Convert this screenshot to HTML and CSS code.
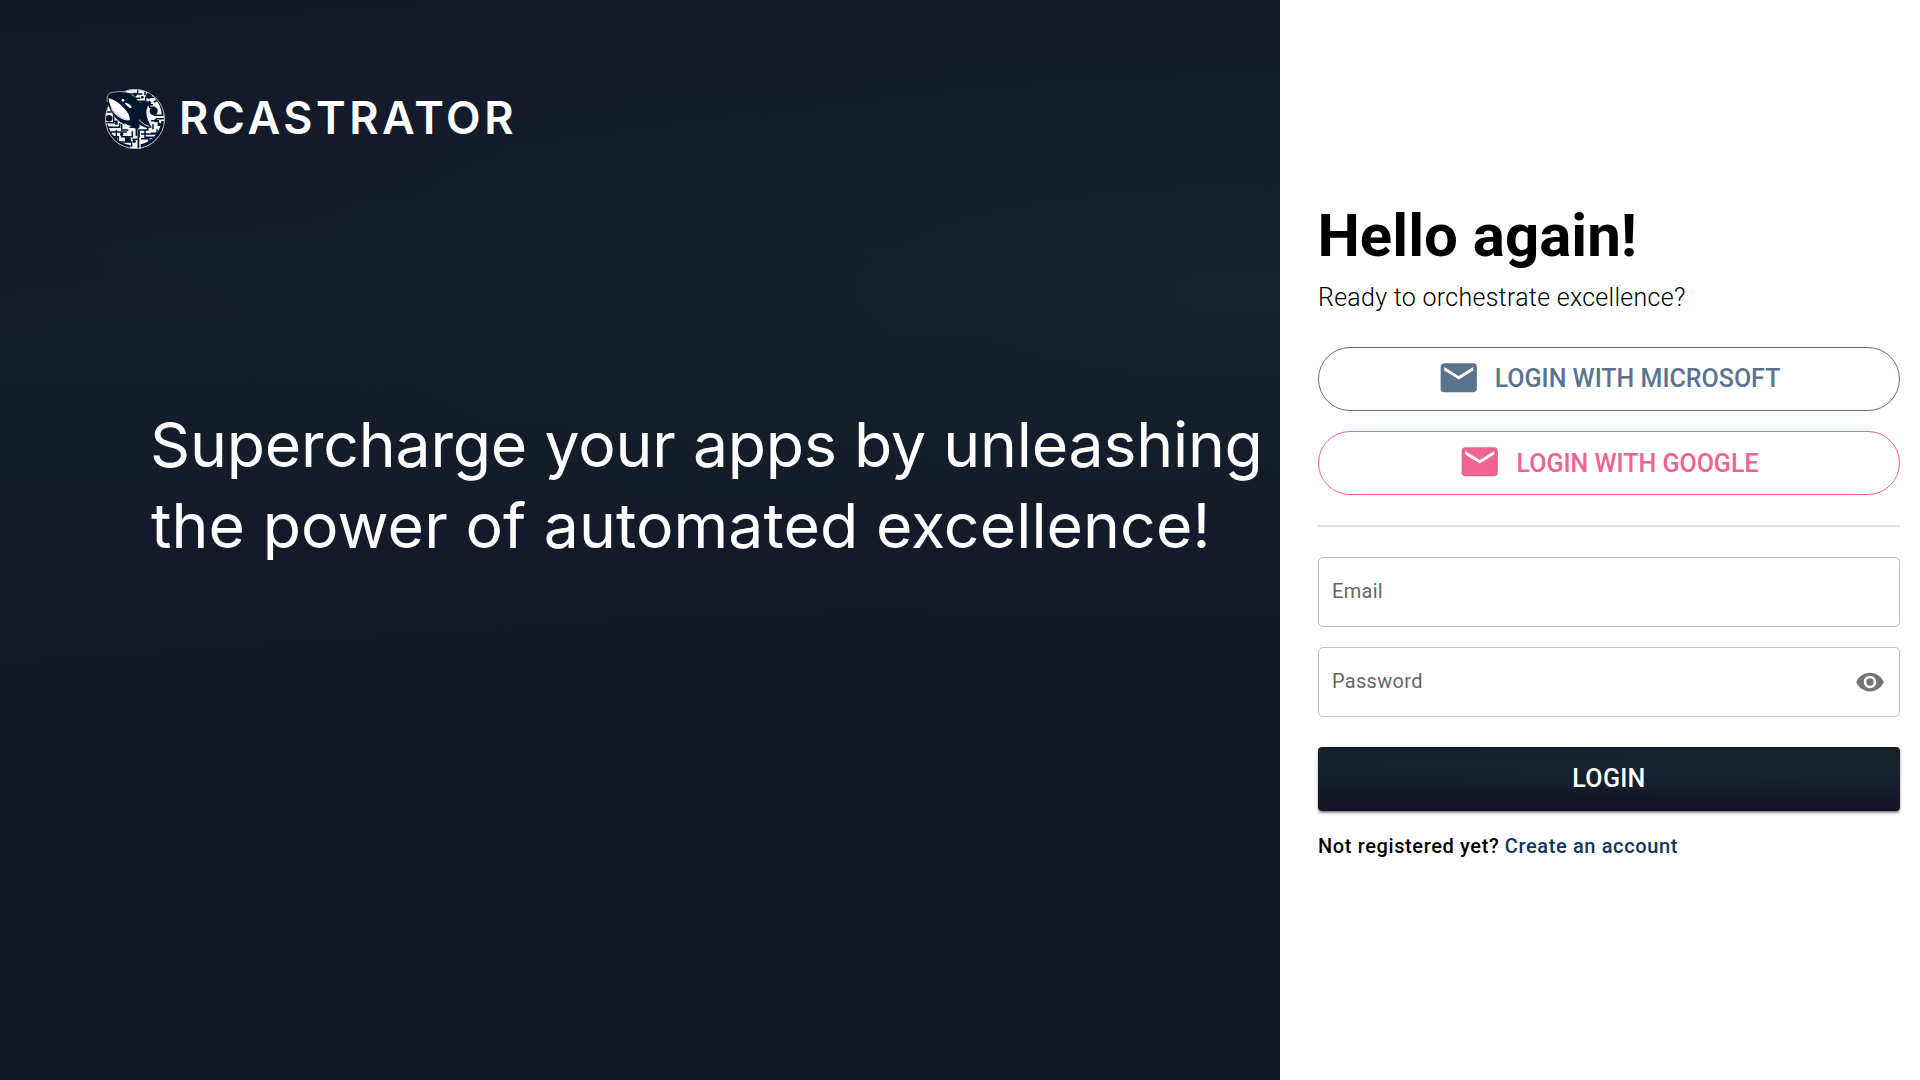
FILE: index.html
```
<!DOCTYPE html>
<html lang="en">
<head>
<meta charset="utf-8">
<title>Rcastrator - Login</title>
<link rel="stylesheet" href="styles.css">
</head>
<body>
<div class="page">
  <section class="hero">
    <header class="brand">
      <svg class="brand-logo" viewBox="30 27 180 180" aria-hidden="true">
        <defs><clipPath id="disc"><circle cx="120" cy="117" r="88"/></clipPath></defs>
        <circle cx="120" cy="117" r="89" fill="#f4f5f8"/>
        <g clip-path="url(#disc)" fill="none" stroke="#04162e" stroke-width="4.500">
          <path d="M100 42h20v10M128 28v14h14M150 30v16M108 55h28M130 64h22v-12h26M146 74h28M118 38v10M164 62v20h16M176 66l14-6M182 116h26M176 106h30M168 122h22v14h18M174 132v16M186 148v12h-18"/>
          <path d="M34 96h16M32 128h24v-12M56 104v20h12M38 142h36v-12M80 132v18h20M46 156h50M64 150v28M80 158v12h34M104 142h20v26M48 170h22v18M76 186h34v14M92 172v14M134 150h24v-8M138 162h44M150 150v22h28M138 176h24v18M168 176v12h14M112 154v16M112 178h16M90 196v10"/>
          <path d="M206 124A87 87 0 0 1 134 200" stroke-width="13"/>
          <path d="M33 134A88 88 0 0 0 106 201" stroke-width="11"/>
          <path d="M178 44A91 91 0 0 1 207 104" stroke-width="13"/>
        </g>
        <g fill="#04162e">
          <circle cx="162" cy="47" r="9"/><circle cx="176" cy="93" r="12"/><circle cx="42" cy="115" r="10"/><circle cx="100" cy="179" r="8"/>
          <circle cx="122" cy="43" r="5"/><circle cx="142" cy="52" r="4"/><circle cx="64" cy="130" r="5"/><circle cx="182" cy="122" r="5"/><circle cx="80" cy="163" r="5"/><circle cx="118" cy="184" r="5"/><circle cx="194" cy="132" r="4"/>
        </g>
        <path d="M131 148v56" stroke="#04162e" stroke-width="7"/>
        <path d="M135 172v34" stroke="#f4f5f8" stroke-width="4"/>
        <circle cx="120" cy="117" r="88.500" fill="none" stroke="#aeb5c1" stroke-width="2.500"/>
        <path d="M37 66C33 45 42 36 58 37C75 32 95 36 109 45C120 51 127 60 134 68C145 62 158 64 169 68C158 74 153 85 153 97C153 113 160 127 169 142C158 146 143 139 132 132C134 139 132 145 127 147C113 142 99 131 84 130C61 119 46 92 37 66Z" fill="#04162e" stroke="#04162e" stroke-width="2"/>
        <path d="M37 66C33 45 42 36 58 37C68 34 78 34 88 36" fill="none" stroke="#bfc5d0" stroke-width="2.500"/>
        <path d="M41 55C55 57 76 71 89 87C100 99 106 110 104 121C88 120 67 106 54 90C46 78 41 67 41 55Z" fill="#fff"/>
        <path d="M46 76C56 95 77 113 103 121C88 124 65 110 54 96C49 89 47 83 46 76Z" fill="#d4d6ec"/>
        <path d="M89 68C96 68 106 73 109 79C112 85 105 86 99 80C96 76 91 73 89 68Z" fill="#fff"/>
        <circle cx="84" cy="61" r="4" fill="#fff"/>
        <path d="M132 119C143 131 153 137 163 139" fill="none" stroke="#e5e8ef" stroke-width="3"/>
      </svg>
      <span class="brand-name">RCASTRATOR</span>
    </header>
    <p class="tagline"><span class="tagline-first">Supercharge your apps by unleashing</span><br><span class="tagline-second">the power of automated excellence!</span></p>
  </section>

  <main class="panel">
    <h1 class="title">Hello again!</h1>
    <p class="subtitle">Ready to orchestrate excellence?</p>
    <div class="providers">
      <button class="provider provider-microsoft" type="button">
        <svg class="mail-icon" viewBox="0 0 24 24" aria-hidden="true"><path d="M20 4H4c-1.100 0-1.990.9-1.990 2L2 18c0 1.100.9 2 2 2h16c1.100 0 2-.9 2-2V6c0-1.100-.9-2-2-2zm0 4-8 5-8-5V6l8 5 8-5v2z"/></svg>
        <span>LOGIN WITH MICROSOFT</span>
      </button>
      <button class="provider provider-google" type="button">
        <svg class="mail-icon" viewBox="0 0 24 24" aria-hidden="true"><path d="M20 4H4c-1.100 0-1.990.9-1.990 2L2 18c0 1.100.9 2 2 2h16c1.100 0 2-.9 2-2V6c0-1.100-.9-2-2-2zm0 4-8 5-8-5V6l8 5 8-5v2z"/></svg>
        <span>LOGIN WITH GOOGLE</span>
      </button>
    </div>
    <hr class="divider">
    <form class="form">
      <div class="field"><span class="label">Email</span></div>
      <div class="field">
        <span class="label">Password</span>
        <svg class="eye-icon" viewBox="0 0 24 24" aria-hidden="true"><path d="M12 4.500C7 4.500 2.730 7.610 1 12c1.730 4.390 6 7.500 11 7.500s9.270-3.110 11-7.500c-1.730-4.390-6-7.500-11-7.500zM12 17c-2.760 0-5-2.240-5-5s2.240-5 5-5 5 2.240 5 5-2.240 5-5 5zm0-8c-1.660 0-3 1.340-3 3s1.340 3 3 3 3-1.340 3-3-1.340-3-3-3z"/></svg>
      </div>
      <button class="login" type="button">LOGIN</button>
    </form>
    <p class="signup">Not registered yet? <a class="signup-link">Create an account</a></p>
  </main>
</div>
</body>
</html>
```
FILE: styles.css
```
* { box-sizing: border-box; }

body {
  margin: 0;
  font-family: Roboto, sans-serif;
  color: #000;
  background: #fff;
}

h1, p { margin: 0; }

.page {
  display: grid;
  grid-template-columns: 1280px 1fr;
  height: 100vh;
  overflow: hidden;
}

.hero {
  padding: 89px 0 0 105px;
  background:
    radial-gradient(ellipse 105% 34% at 98% 27%, rgba(22, 35, 44, 0.85) 0%, rgba(22, 33, 43, 0.35) 50%, rgba(20, 26, 41, 0) 100%),
    linear-gradient(176deg, #131628 0%, #141a2a 12%, #151c2b 28%, #141b2a 42%, #131628 60%, #131627 85%, #121525 100%);
  color: #fff;
  font-family: Inter, sans-serif;
}

.brand {
  display: flex;
  align-items: center;
  gap: 14px;
  height: 60px;
}

.brand-logo { width: 60px; height: 60px; }

.brand-name {
  margin-bottom: 3px;
  font-size: 45px;
  font-weight: 600;
  line-height: 54px;
  letter-spacing: 3.500px;
}

.tagline {
  margin: 255px 0 0 45px;
  font-size: 62.500px;
  line-height: 81px;
  white-space: nowrap;
}

.tagline-first { letter-spacing: -0.200px; }
.tagline-second { padding-left: 1px; letter-spacing: 0.080px; }

.panel { padding: 200px 20px 0 38px; }

.title {
  margin-left: -0.500px;
  font-size: 60px;
  font-weight: 700;
  line-height: 71px;
}

.subtitle {
  margin-top: 8px;
  font-size: 25px;
  font-weight: 300;
  line-height: 37px;
  letter-spacing: 0.280px;
}

.providers {
  display: flex;
  flex-direction: column;
  gap: 20px;
  margin-top: 31px;
}

.provider {
  display: flex;
  align-items: center;
  justify-content: center;
  gap: 14.500px;
  height: 64px;
  padding: 0 1px 0 0;
  border: 1px solid currentColor;
  border-radius: 32px;
  background: transparent;
  font: 500 25px/30px Roboto, sans-serif;
}

.provider-microsoft { color: #5a738e; }
.provider-google { padding-top: 1px; color: #f06292; }

.mail-icon {
  width: 43.500px;
  height: 43.500px;
  margin-bottom: 3px;
  fill: currentColor;
}

.divider {
  height: 2px;
  margin: 30px 0;
  border: 0;
  background: #e0e0e0;
}

.form { display: flex; flex-direction: column; }

.field {
  display: flex;
  align-items: center;
  justify-content: space-between;
  height: 70px;
  padding: 0 14px 0 13px;
  border: 1px solid #c0c0c0;
  border-radius: 5px;
}

.field + .field { margin-top: 20px; }

.label {
  margin-bottom: 2px;
  color: #666;
  font-size: 20px;
  line-height: 28px;
  letter-spacing: 0.300px;
}

.eye-icon { width: 30px; height: 30px; fill: #757575; }

.login {
  height: 64px;
  margin-top: 30px;
  padding: 0;
  border: 0;
  border-radius: 4px;
  background:
    radial-gradient(ellipse 105% 50% at 96% 28%, rgba(24, 38, 46, 0.7) 0%, rgba(22, 34, 44, 0) 100%),
    linear-gradient(180deg, #151d2a 0%, #16212c 28%, #151e2b 55%, #131628 80%, #131427 100%);
  color: #fff;
  font: 500 25px/30px Roboto, sans-serif;
  letter-spacing: 0.300px;
  box-shadow: 0 3px 1px -2px rgba(0, 0, 0, 0.2), 0 2px 2px rgba(0, 0, 0, 0.14), 0 1px 5px rgba(0, 0, 0, 0.12), 0 2px 3px rgba(0, 0, 0, 0.2);
}

.signup {
  margin-top: 20px;
  font-size: 20px;
  font-weight: 500;
  line-height: 30px;
  letter-spacing: 0.620px;
}

.signup-link { color: #12355b; }
```
